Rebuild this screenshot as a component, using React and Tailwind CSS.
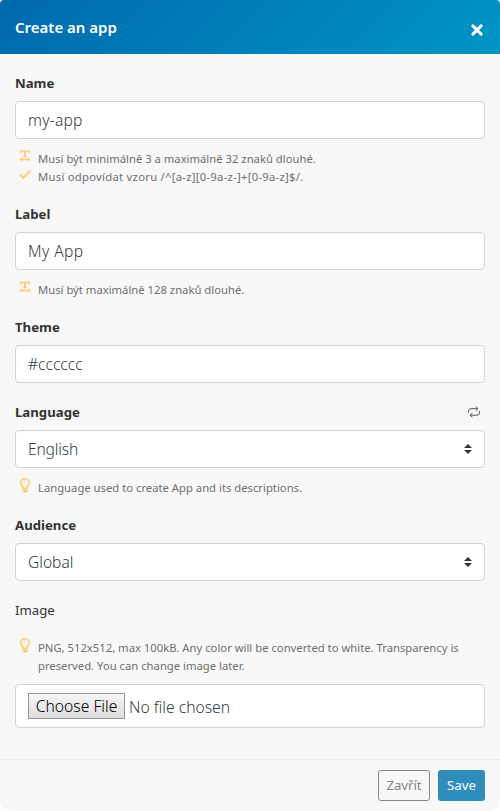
import React from "react";

const WidthIcon = () => (
  <svg className="h-3 w-3" viewBox="0 0 12 12" fill="none" stroke="#ffcb6b" strokeWidth="1.3">
    <path d="M1.6 3.4V1.1h8.8v2.3M4 6.6h4M1 9.5h10" />
    <path d="M6 1v5.4" strokeWidth="2" />
    <path d="M3 7.6v3.8L.2 9.5zM9 7.6v3.8l2.8-1.9z" fill="#ffcb6b" stroke="none" />
  </svg>
);

const CheckIcon = () => (
  <svg className="mt-px h-3 w-3" viewBox="0 0 12 12" fill="none" stroke="#ffcb6b" strokeWidth="2">
    <path d="M.9 5.8l3.3 3.1 7-7" />
  </svg>
);

const BulbIcon = () => (
  <svg className="-mt-px h-[15px] w-3" viewBox="0 0 12 15" fill="none" stroke="#ffcb6b" strokeWidth="1.6">
    <path d="M4.1 10.2C4.1 8.4 1.6 7.6 1.6 5a4.4 4.2 0 0 1 8.8 0c0 2.6-2.5 3.4-2.5 5.2z" />
    <path d="M3.8 5.2C3.8 3.8 4.6 3.2 6 3.2" strokeWidth="1" />
    <path d="M3.5 11.6h5v1.7L7.6 14.6H4.4l-.9-1.3z" fill="#ffcb6b" stroke="none" />
  </svg>
);

const RepeatIcon = () => (
  <svg className="mt-px h-3 w-3.5" viewBox="0 0 14 12" fill="none" stroke="#555" strokeWidth="1">
    <path d="M1.5 6.8V5.2a2.5 2.5 0 0 1 2.5-2.5h6.8M8.6.6l2.3 2.1-2.3 2M12.5 5v1.7A2.5 2.5 0 0 1 10 9.2H3.2M5.4 7.2L3.1 9.2l2.3 2.1" />
  </svg>
);

const Label = ({ children, action }) => (
  <div className="mb-2 flex h-[21px] items-center justify-between pr-1">
    <label className="pt-px text-[13.2px] leading-[20px] font-bold text-[#333]">{children}</label>
    {action}
  </div>
);

const Box = ({ children, className = "", select }) => (
  <div className="flex h-[38px] items-center justify-between rounded border border-[#ced4da] bg-white px-3">
    <span className={`text-[15.6px] leading-6 font-light text-[#343b42] ${className}`}>{children}</span>
    {select && (
      <svg className="h-2.5 w-2" viewBox="0 0 8 10" fill="#333">
        <path d="M4 0l4 4H0zM4 10l4-4H0z" />
      </svg>
    )}
  </div>
);

const Hint = ({ icon, children, className = "" }) => (
  <div className="flex pl-1 text-[11.27px] leading-[18px] text-[#6f6f6f]">
    <span className="mr-[7px] block h-[18px] w-3 shrink-0 pt-px">{icon}</span>
    <span className={`-mb-px whitespace-nowrap pt-px ${className}`}>{children}</span>
  </div>
);

export default function App() {
  return (
    <div className="h-[811px] w-[500px] overflow-hidden rounded-t rounded-b-[10px] bg-[#f8f8f8] font-['Noto_Sans','Open_Sans',sans-serif]">
      <header className="flex h-[54px] items-center justify-between bg-linear-135 from-[#0069ad] to-[#0095c4] pr-[17px] pl-[15px] text-white">
        <h1 className="text-[15px] leading-6 font-semibold">Create an app</h1>
        <svg className="mt-[6px] h-3 w-3" viewBox="0 0 12 12" stroke="#fff" strokeWidth="3" strokeLinecap="round">
          <path d="M1.9 1.9l8.2 8.2M10.1 1.9l-8.2 8.2" />
        </svg>
      </header>
      <main className="flex flex-col gap-[18px] px-[15px] pt-[18px] pb-[31px]">
        <section>
          <Label>Name</Label>
          <Box className="tracking-[0.2px]">my-app</Box>
          <div className="mt-2.5">
            <Hint icon={<WidthIcon />}>Musí být minimálně 3 a maximálně 32 znaků dlouhé.</Hint>
            <Hint icon={<CheckIcon />} className="tracking-[0.27px]">
              Musí odpovídat vzoru /^[a-z][0-9a-z-]+[0-9a-z]$/.
            </Hint>
          </div>
        </section>
        <section>
          <Label>Label</Label>
          <Box className="tracking-[0.4px]">My App</Box>
          <div className="mt-2.5">
            <Hint icon={<WidthIcon />}>Musí být maximálně 128 znaků dlouhé.</Hint>
          </div>
        </section>
        <section>
          <Label>Theme</Label>
          <Box>#cccccc</Box>
        </section>
        <section>
          <Label action={<RepeatIcon />}>Language</Label>
          <Box select className="tracking-[-0.15px]">English</Box>
          <div className="mt-2.5">
            <Hint icon={<BulbIcon />}>Language used to create App and its descriptions.</Hint>
          </div>
        </section>
        <section>
          <Label>Audience</Label>
          <Box select>Global</Box>
        </section>
        <section>
          <div className="mb-[18px] h-[21px] text-[13.2px] leading-[22px] text-[#333]">Image</div>
          <Hint icon={<BulbIcon />}>
            PNG, 512x512, max 100kB. Any color will be converted to white. Transparency is
            <br />
            preserved. You can change image later.
          </Hint>
          <div className="mt-2.5 flex h-11 items-center rounded border border-[#ced4da] bg-white px-3 text-[15.7px] font-light">
            <button className="h-[26px] w-[97px] border border-[#979797] bg-linear-to-b from-[#f6f6f6] to-[#dddddd] leading-6 whitespace-nowrap text-black">
              Choose File
            </button>
            <span className="ml-1 pt-0.5 leading-6 text-[#343b42]">No file chosen</span>
          </div>
        </section>
      </main>
      <footer className="flex h-[52px] items-start justify-end gap-2 border-t border-[#e9ecef] px-[15px] pt-2.5 text-[13.2px] leading-[21px]">
        <button className="h-[31px] w-[52px] rounded-[3px] border border-[#868686] text-[#868686]">Zavřít</button>
        <button className="h-[31px] w-[47px] rounded-[3px] bg-[#2f8dbe] text-white">Save</button>
      </footer>
    </div>
  );
}
